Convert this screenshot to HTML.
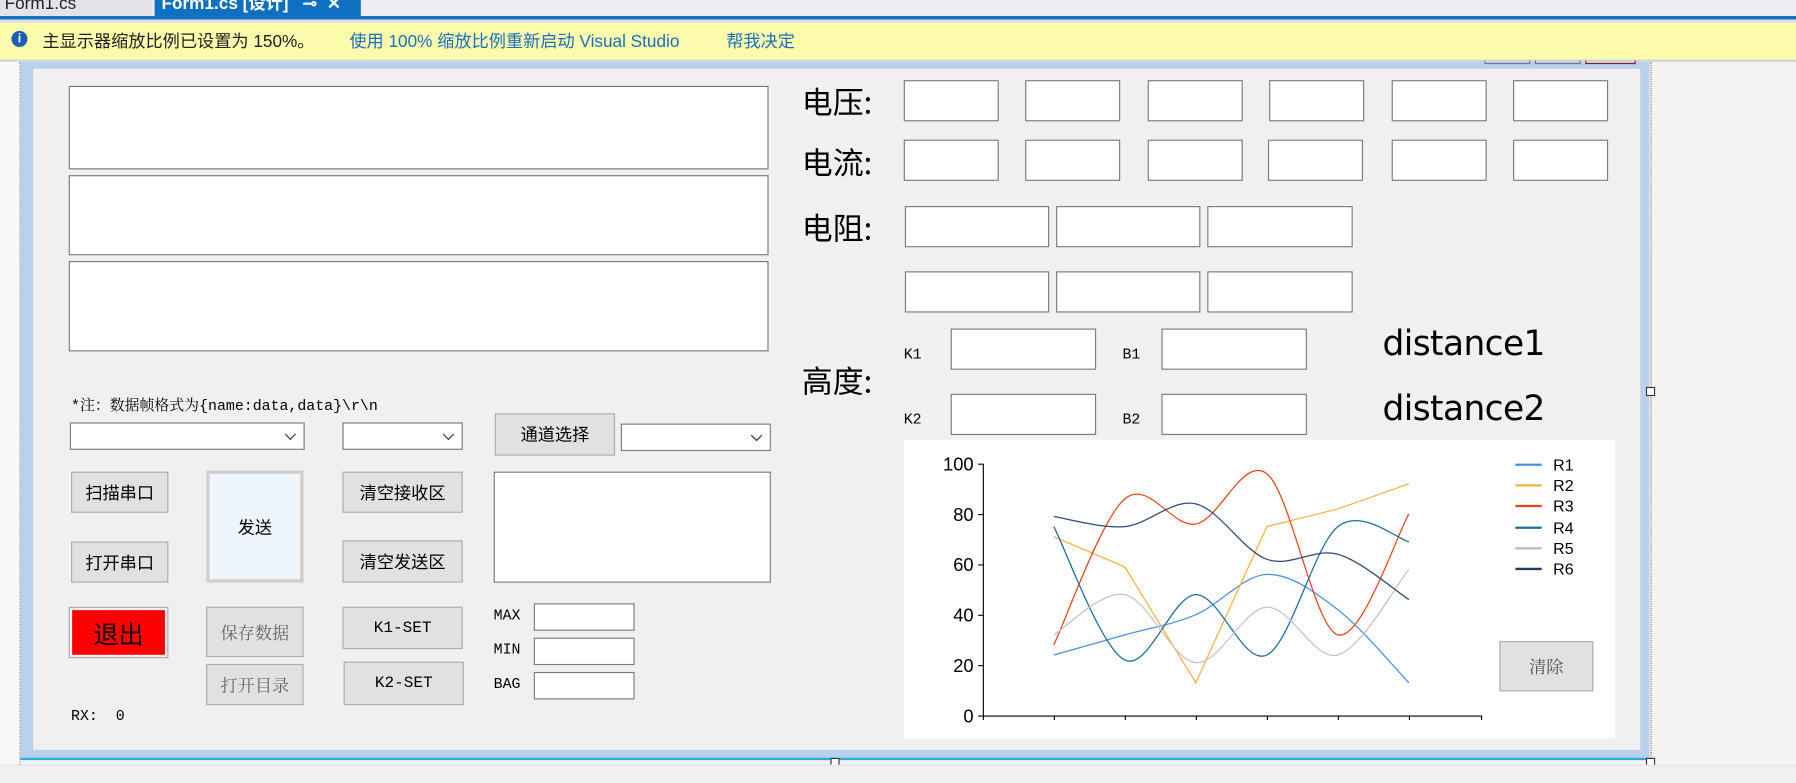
<!DOCTYPE html>
<html><head><meta charset="utf-8">
<style>
html,body{margin:0;padding:0;width:1796px;height:783px;overflow:hidden;background:#f4f4f4}
#w{position:absolute;left:0;top:0;width:1568px;height:684px;transform:scale(1.14541,1.14474);transform-origin:0 0;font-family:"Liberation Sans","Noto Sans CJK SC",sans-serif}
.a{position:absolute;box-sizing:border-box}
.tb{background:#fff;border:1px solid #7a7a7a}
.bt{background:#e1e1e1;border:1px solid #adadad;display:flex;align-items:center;justify-content:center;font-size:15px;color:#000;font-family:"Noto Sans CJK SC",sans-serif}
.sf{font-family:"Liberation Mono","Noto Serif CJK SC",monospace}
.lbl{font-size:27px;font-family:"Noto Sans CJK SC",sans-serif;line-height:1}
.cb{background:#fff;border:1px solid #7a7a7a}
.cb:after{content:"";position:absolute;right:8px;top:6px;width:6px;height:6px;border-right:1px solid #333;border-bottom:1px solid #333;transform:rotate(45deg)}
.sm{font-size:13px;font-family:"Liberation Mono","Noto Serif CJK SC",monospace}
</style></head><body>
<div id="w">
<div class="a" style="left:0;top:0;width:1568px;height:14px;background:#eeeef2"></div>
<div class="a" style="left:0;top:0;width:133px;height:14px;background:#e3e3e8;font-size:15px;line-height:8px;color:#222;padding-left:4px;overflow:hidden">Form1.cs</div>
<div class="a" style="left:135px;top:0;width:180px;height:14px;background:#0e70c0;color:#fff;font-size:15px;font-weight:bold;line-height:8px;padding-left:6px;overflow:hidden">Form1.cs [设计] &nbsp; ⊸ &nbsp;✕</div>
<div class="a" style="left:0;top:14px;width:1568px;height:3px;background:#0e70c0"></div>
<div class="a" style="left:0;top:17px;width:1568px;height:3px;background:#ddd"></div>
<div class="a" style="left:0;top:20px;width:1568px;height:32px;background:#fcfcac"></div>
<div class="a" style="left:10px;top:27px;width:14px;height:14px;border-radius:50%;background:#1a5fb4;color:#fff;font-size:11px;font-weight:bold;text-align:center;line-height:14px">i</div>
<div class="a" style="left:37px;top:25px;font-size:15px;color:#1e1e1e;white-space:nowrap">主显示器缩放比例已设置为 150%。</div>
<div class="a" style="left:305px;top:25px;font-size:15px;color:#1a6ec0;white-space:nowrap">使用 100% 缩放比例重新启动 Visual Studio</div>
<div class="a" style="left:634px;top:25px;font-size:15px;color:#1a6ec0;white-space:nowrap">帮我决定</div>
<div class="a" style="left:0;top:52px;width:1568px;height:2px;background:#cfd3da"></div>
<div class="a" style="left:0;top:54px;width:18px;height:614px;background:#f8f8f8;border-right:1px dotted #888"></div>
<div class="a" style="left:18px;top:54px;width:1422px;height:610px;background:#b9d1ea"></div>
<div class="a" style="left:1441px;top:54px;width:1px;height:612px;border-left:1px dotted #777"></div>
<div class="a" style="left:18px;top:662px;width:1424px;height:2px;background:#2aaee0"></div>
<div class="a" style="left:1296px;top:53px;width:40px;height:3px;border:1px solid #777;border-top:none"></div>
<div class="a" style="left:1340px;top:53px;width:40px;height:3px;border:1px solid #777;border-top:none"></div>
<div class="a" style="left:1384px;top:53px;width:44px;height:3px;border:1px solid #8a2020;border-top:none"></div>
<div class="a" style="left:29px;top:60px;width:1403px;height:595px;background:#f0f0f0"></div>
<div class="a" style="left:1437px;top:338px;width:8px;height:8px;background:#fff;border:1px solid #333"></div>
<div class="a" style="left:725px;top:662px;width:8px;height:8px;background:#fff;border:1px solid #333"></div>
<div class="a" style="left:1437px;top:662px;width:8px;height:8px;background:#fff;border:1px solid #333"></div>
<div class="a" style="left:0;top:668px;width:1568px;height:16px;background:#f0f0f0;border-top:1px solid #e2e2e2"></div>

<div class="a tb" style="left:60px;top:75px;width:611px;height:73px"></div>
<div class="a tb" style="left:60px;top:153px;width:611px;height:70px"></div>
<div class="a tb" style="left:60px;top:228px;width:611px;height:79px"></div>

<div class="a lbl" style="left:700px;top:74px">电压:</div>
<div class="a lbl" style="left:700px;top:127px">电流:</div>
<div class="a lbl" style="left:700px;top:184px">电阻:</div>
<div class="a lbl" style="left:700px;top:318px">高度:</div>
<div class="a tb" style="left:789px;top:70px;width:83px;height:36px"></div>
<div class="a tb" style="left:895px;top:70px;width:83px;height:36px"></div>
<div class="a tb" style="left:1002px;top:70px;width:83px;height:36px"></div>
<div class="a tb" style="left:1108px;top:70px;width:83px;height:36px"></div>
<div class="a tb" style="left:1215px;top:70px;width:83px;height:36px"></div>
<div class="a tb" style="left:1321px;top:70px;width:83px;height:36px"></div>
<div class="a tb" style="left:789px;top:122px;width:83px;height:36px"></div>
<div class="a tb" style="left:895px;top:122px;width:83px;height:36px"></div>
<div class="a tb" style="left:1002px;top:122px;width:83px;height:36px"></div>
<div class="a tb" style="left:1107px;top:122px;width:83px;height:36px"></div>
<div class="a tb" style="left:1215px;top:122px;width:83px;height:36px"></div>
<div class="a tb" style="left:1321px;top:122px;width:83px;height:36px"></div>
<div class="a tb" style="left:790px;top:180px;width:126px;height:36px"></div>
<div class="a tb" style="left:922px;top:180px;width:126px;height:36px"></div>
<div class="a tb" style="left:1054px;top:180px;width:127px;height:36px"></div>
<div class="a tb" style="left:790px;top:237px;width:126px;height:36px"></div>
<div class="a tb" style="left:922px;top:237px;width:126px;height:36px"></div>
<div class="a tb" style="left:1054px;top:237px;width:127px;height:36px"></div>
<div class="a sm" style="left:789px;top:302px">K1</div>
<div class="a tb" style="left:830px;top:287px;width:127px;height:36px"></div>
<div class="a sm" style="left:980px;top:302px">B1</div>
<div class="a tb" style="left:1014px;top:287px;width:127px;height:36px"></div>
<div class="a sm" style="left:789px;top:359px">K2</div>
<div class="a tb" style="left:830px;top:344px;width:127px;height:36px"></div>
<div class="a sm" style="left:980px;top:359px">B2</div>
<div class="a tb" style="left:1014px;top:344px;width:127px;height:36px"></div>
<div class="a" style="left:1207px;top:283px;font-size:30px;font-family:'DejaVu Sans',sans-serif;letter-spacing:-0.5px">distance1</div>
<div class="a" style="left:1207px;top:340px;font-size:30px;font-family:'DejaVu Sans',sans-serif;letter-spacing:-0.5px">distance2</div>

<div class="a" style="left:789px;top:384px;width:621px;height:261px;background:#fff"></div>
<svg class="a" style="left:0;top:0" width="1568" height="684">
<g font-family="Liberation Sans, sans-serif" font-size="16" text-anchor="end" fill="#000">
<text x="850" y="411">100</text><text x="850" y="455">80</text><text x="850" y="499">60</text><text x="850" y="543">40</text><text x="850" y="587">20</text><text x="850" y="631">0</text>
</g>
<g stroke="#000" stroke-width="1" fill="none">
<path d="M858.5 405V625.5H1293.5"/>
<path d="M854 405.5h4M854 449.5h4M854 493.5h4M854 537.5h4M854 581.5h4M854 625.5h4"/>
<path d="M920.5 625v4M982.5 625v4M1044.5 625v4M1106.5 625v4M1168.5 625v4M1230.5 625v4M1293.5 625v4M858.5 625v4"/>
</g>
<g id="lines" fill="none" stroke-width="1.1"></g>
<g stroke-width="2">
<line x1="1323" y1="406" x2="1346" y2="406" stroke="#4a90e2"/>
<line x1="1323" y1="424" x2="1346" y2="424" stroke="#fbb040"/>
<line x1="1323" y1="442" x2="1346" y2="442" stroke="#e8461a"/>
<line x1="1323" y1="461" x2="1346" y2="461" stroke="#1a6e9e"/>
<line x1="1323" y1="479" x2="1346" y2="479" stroke="#bbbbbb"/>
<line x1="1323" y1="497" x2="1346" y2="497" stroke="#1f3a66"/>
</g>
<g font-family="Liberation Sans, sans-serif" font-size="14" fill="#000">
<text x="1356" y="411">R1</text><text x="1356" y="429">R2</text><text x="1356" y="447">R3</text><text x="1356" y="466">R4</text><text x="1356" y="484">R5</text><text x="1356" y="502">R6</text>
</g>
</svg>
<div class="a bt" style="left:1309px;top:560px;width:82px;height:44px;color:#555;font-family:'Noto Serif CJK SC',serif">清除</div>

<div class="a sm" style="left:62px;top:343px;white-space:nowrap">*注：数据帧格式为{name:data,data}\r\n</div>
<div class="a cb" style="left:61px;top:369px;width:205px;height:24px"></div>
<div class="a cb" style="left:299px;top:369px;width:105px;height:24px"></div>
<div class="a bt" style="left:432px;top:361px;width:105px;height:37px">通道选择</div>
<div class="a cb" style="left:542px;top:370px;width:131px;height:24px"></div>
<div class="a bt" style="left:62px;top:412px;width:85px;height:36px">扫描串口</div>
<div class="a bt" style="left:62px;top:473px;width:85px;height:36px">打开串口</div>
<div class="a bt" style="left:180px;top:411px;width:85px;height:98px;background:#eef5fc;border:3px solid #d0d0d0">发送</div>
<div class="a bt" style="left:299px;top:412px;width:105px;height:36px">清空接收区</div>
<div class="a bt" style="left:299px;top:472px;width:105px;height:37px">清空发送区</div>
<div class="a tb" style="left:431px;top:412px;width:242px;height:97px"></div>
<div class="a" style="left:60px;top:530px;width:87px;height:45px;border:1px solid #aaa;background:#f0f0f0;padding:2px"><div style="width:100%;height:100%;background:#ff0000;font-size:22px;display:flex;align-items:center;justify-content:center;font-family:'Noto Sans CJK SC',sans-serif">退出</div></div>
<div class="a bt" style="left:180px;top:530px;width:85px;height:44px;color:#666;font-family:'Noto Serif CJK SC',serif">保存数据</div>
<div class="a bt" style="left:180px;top:580px;width:85px;height:36px;color:#666;font-family:'Noto Serif CJK SC',serif">打开目录</div>
<div class="a bt sf" style="left:299px;top:530px;width:105px;height:37px;font-size:14px">K1-SET</div>
<div class="a bt sf" style="left:300px;top:578px;width:105px;height:38px;font-size:14px">K2-SET</div>
<div class="a sm" style="left:431px;top:530px">MAX</div>
<div class="a tb" style="left:466px;top:527px;width:88px;height:24px"></div>
<div class="a sm" style="left:431px;top:560px">MIN</div>
<div class="a tb" style="left:466px;top:557px;width:88px;height:24px"></div>
<div class="a sm" style="left:431px;top:590px">BAG</div>
<div class="a tb" style="left:466px;top:587px;width:88px;height:24px"></div>
<div class="a sm" style="left:62px;top:618px">RX:&nbsp; 0</div>
</div>
<script>
var xs=[920,982,1044,1106,1168,1230];
var data=[[24,32,40,56,42,13,'#4a90e2',1],[71,59,13,75,82,92,'#fbb040',0],[28,86,76,96,32,80,'#e8461a',1],[75,22,48,24,75,69,'#1a6e9e',1],[32,48,21,43,24,58,'#c4c4c4',1],[79,75,84,62,64,46,'#2d4a78',1]];
var g=document.getElementById('lines'),h='';
data.forEach(function(d){
 var p=xs.map(function(x,i){return [x,625-d[i]*2.2]});
 var s='M'+p[0][0]+' '+p[0][1];
 for(var i=0;i<p.length-1;i++){
  if(!d[7]){s+=' L'+p[i+1][0]+' '+p[i+1][1];continue;}
  var p0=p[i-1]||p[i],p1=p[i],p2=p[i+1],p3=p[i+2]||p[i+1];
  var t=0.5/3;
  s+=' C'+(p1[0]+(p2[0]-p0[0])*t)+' '+(p1[1]+(p2[1]-p0[1])*t)+' '+(p2[0]-(p3[0]-p1[0])*t)+' '+(p2[1]-(p3[1]-p1[1])*t)+' '+p2[0]+' '+p2[1];
 }
 h+='<path d="'+s+'" stroke="'+d[6]+'"/>';
});
g.innerHTML=h;
</script>
</body></html>
